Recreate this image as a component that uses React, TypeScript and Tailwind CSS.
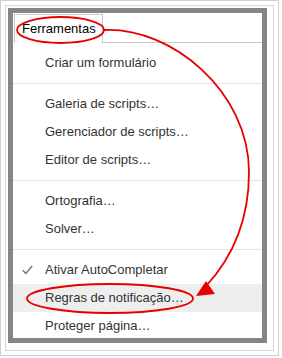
import { FC } from "react";

const Check: FC = () => (
  <svg width="11" height="10" viewBox="0 0 11 10" className="ml-[9px]">
    <polyline points="0.8,5.2 3.8,8.4 10.2,1" fill="none" stroke="#777" strokeWidth="1.5" />
  </svg>
);

interface RowProps {
  label: string;
  checked?: boolean;
  active?: boolean;
}

const Row: FC<RowProps> = ({ label, checked, active }) => (
  <div className={`flex items-center h-[28px] ${active ? "bg-[#eeeeee]" : ""}`}>
    <div className="w-[32px] flex items-center">{checked && <Check />}</div>
    <span className="text-[#333]">{label}</span>
  </div>
);

const Sep: FC = () => <div className="my-[6px] h-px bg-[#e3e3e3]" />;

const Annotations: FC = () => (
  <svg
    className="absolute left-0 top-0 pointer-events-none"
    width="282"
    height="358"
    viewBox="0 0 282 358"
  >
    <g fill="none" stroke="#e60000" strokeWidth="1.8">
      <ellipse cx="60.5" cy="30" rx="43.5" ry="13" />
      <ellipse cx="110" cy="298.5" rx="83" ry="14.5" />
      <path d="M104,30 C172,27 249,92 249,172 C249,222 232,258 206,286" />
    </g>
    <polygon points="196,296 206,281 215,294" fill="#e60000" />
  </svg>
);

const App: FC = () => {
  return (
    <div
      className="relative w-[282px] h-[358px] bg-white overflow-hidden text-[13px]"
      style={{ fontFamily: '"Liberation Sans", Arial, sans-serif' }}
    >
      <div className="w-[279px] h-[356px] border border-[#cfcfcf] p-[4px]">
        <div className="w-full h-full border border-[#d6d6d6] pt-[2px] pl-[2px] pr-[6px] pb-[7px]">
          <div className="w-full h-full border-[5px] border-[#858585] bg-white overflow-hidden flex flex-col">
            <div className="flex h-[30px] shrink-0">
              <div className="mt-px ml-px flex items-center border-l border-t border-r border-[#c8c8c8] pl-[7px] pr-[6px] text-black">
                Ferramentas
              </div>
              <div className="flex-1 border-b border-[#c8c8c8]" />
            </div>
            <div className="pt-[6px]">
              <Row label="Criar um formulário" />
              <Sep />
              <Row label="Galeria de scripts…" />
              <Row label="Gerenciador de scripts…" />
              <Row label="Editor de scripts…" />
              <Sep />
              <Row label="Ortografia…" />
              <Row label="Solver…" />
              <Sep />
              <Row label="Ativar AutoCompletar" checked />
              <Row label="Regras de notificação…" active />
              <Row label="Proteger página…" />
            </div>
          </div>
        </div>
      </div>
      <Annotations />
    </div>
  );
};

export default App;
